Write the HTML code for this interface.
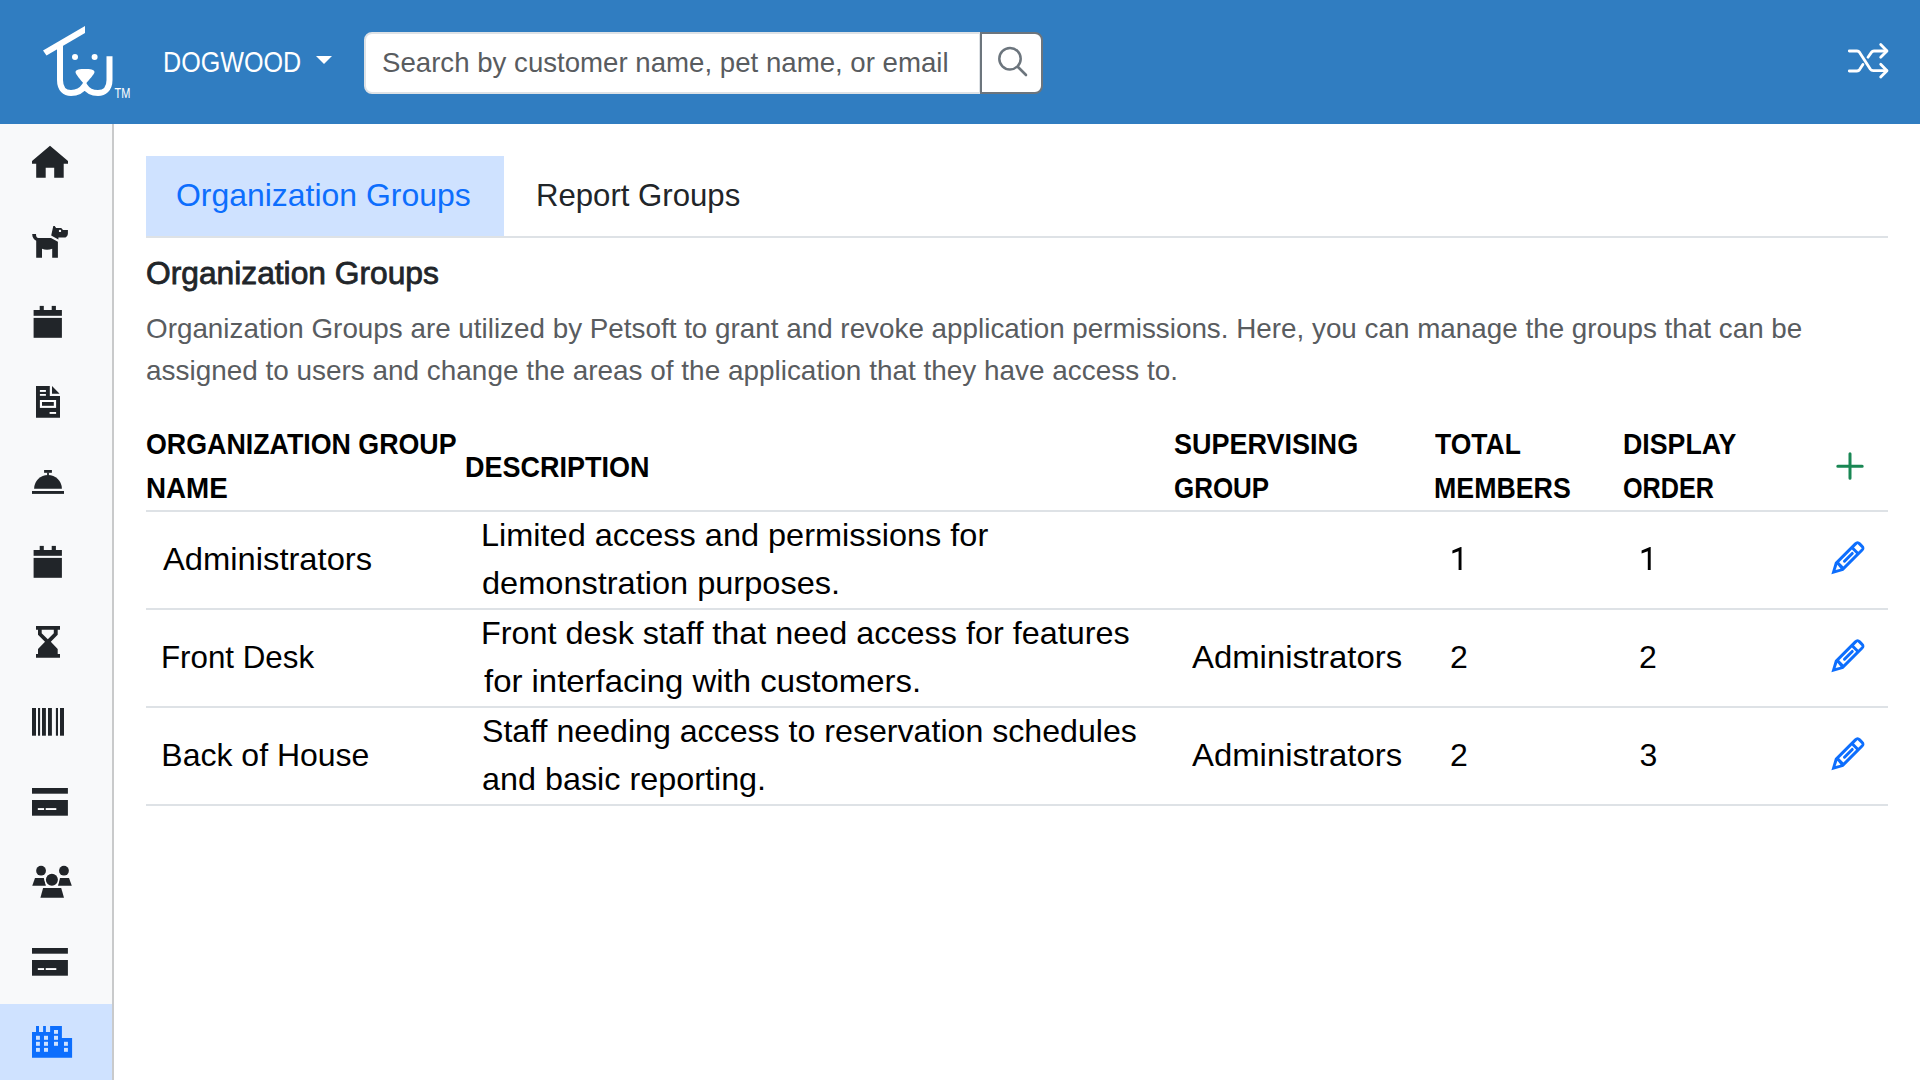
<!DOCTYPE html>
<html>
<head>
<meta charset="utf-8">
<style>
*{margin:0;padding:0;box-sizing:border-box;}
html,body{width:1920px;height:1080px;overflow:hidden;background:#fff;font-family:"Liberation Sans",sans-serif;color:#212529;}
.abs{position:absolute;white-space:nowrap;}
#hdr{position:absolute;left:0;top:0;width:1920px;height:124px;background:#307dc1;}
#side{position:absolute;left:0;top:124px;width:112px;height:956px;background:#f8f9fa;}
#sideb{position:absolute;left:112px;top:124px;width:2px;height:956px;background:#c9cacb;}
#active{position:absolute;left:0;top:1004px;width:112px;height:76px;background:#cfe2ff;}
.t32{font-size:32px;line-height:48px;}
.t28{font-size:28px;line-height:42px;}
.th{font-size:28px;line-height:44px;font-weight:bold;color:#000;}
.td{font-size:32px;line-height:48px;color:#000;}
.hl{position:absolute;left:146px;width:1742px;height:2px;background:#dee2e6;}
</style>
</head>
<body>
<div id="hdr"></div>
<!-- logo -->
<svg class="abs" style="left:0;top:0" width="140" height="124" viewBox="0 0 140 124">
  <polygon points="43,50.5 85,26 85,33 46.5,55.5" fill="#fff"/>
  <path d="M60,45 V80 C60,89 65,93 71,93 C77,93 82,90 84.6,86 C87,90 92,93 98,93 C104,93 109.5,89 109.5,80 V56.2" stroke="#fff" stroke-width="6" fill="none"/>
  <path d="M75.5,72 C75.5,69.5 80,69 85,69 C90,69 94.5,69.5 94.5,72 C94.5,74 89,80 86,83.5 C85.3,84.3 84.3,84.3 83.6,83.5 C80.5,80 75.5,74 75.5,72 Z" fill="#fff"/>
  <circle cx="75" cy="57" r="3" fill="#fff"/>
  <circle cx="94.6" cy="57" r="3" fill="#fff"/>
  <text x="114.6" y="98" font-family="Liberation Sans" font-size="14" fill="#fff" textLength="15.8" lengthAdjust="spacingAndGlyphs">TM</text>
</svg>
<svg class="abs" style="left:316px;top:56px" width="16" height="8" viewBox="0 0 16 8"><polygon points="0,0 16,0 8,8" fill="#fff"/></svg>
<!-- search -->
<div class="abs" style="left:364px;top:32px;width:617px;height:62px;background:#fff;border:2px solid #dee2e6;border-radius:8px 0 0 8px;"></div>
<div class="abs" style="left:980px;top:32px;width:63px;height:62px;background:#fff;border:2px solid #6c757d;border-radius:0 8px 8px 0;"></div>
<svg class="abs" style="left:980px;top:32px" width="63" height="62" viewBox="980 32 63 62">
  <circle cx="1010" cy="58.7" r="10.7" stroke="#6c757d" stroke-width="2.5" fill="none"/>
  <line x1="1018" y1="67" x2="1026" y2="75" stroke="#6c757d" stroke-width="2.6" stroke-linecap="round"/>
</svg>
<!-- shuffle -->
<svg class="abs" style="left:1830px;top:30px" width="70" height="60" viewBox="1830 30 70 60" fill="none" stroke="#fff" stroke-width="2.8" stroke-linecap="round" stroke-linejoin="round">
  <path d="M1849.3,51 H1857 Q1858.6,51 1859.6,52.4 L1870.4,69.3 Q1871.4,70.7 1873.2,70.7 H1886.5"/>
  <path d="M1849.3,71 H1857 Q1858.6,71 1859.6,69.6 L1862.9,64.5"/>
  <path d="M1868,57.2 L1871.4,52.4 Q1872.4,51 1874,51 H1886.5"/>
  <path d="M1880.7,44.6 L1887,51 L1880.7,57.3"/>
  <path d="M1880.7,64.2 L1887,70.7 L1880.7,77.1"/>
</svg>

<!-- sidebar -->
<div id="side"></div>
<div id="active"></div>
<div id="sideb"></div>
<svg class="abs" style="left:0;top:0" width="112" height="1080" viewBox="0 0 112 1080">
  <g fill="#212529">
    <!-- home -->
    <path d="M32,161 L50,145.8 L68,161 V163.8 H63.7 V177.7 H54.2 V167.8 H45.7 V177.7 H36.2 V163.8 H32 Z"/>
    <!-- dog -->
    <path d="M32.2,234 H36 C36,236.5 36.8,238 38.5,238 H51 L57.9,241.8 V257.7 H52.2 V248.7 Q47,250.8 42,248.7 V257.7 H36.2 V240.8 C34,239.8 32.2,237.5 32.2,234 Z"/>
    <path d="M53.3,226 H54.7 L56.1,228.1 H61.2 L63,230 H67.9 V233.4 C67.9,236 66,237.6 64,237.6 H58.4 V239.4 L51.2,235.5 Z"/>
    <circle cx="60" cy="230.9" r="1.2" fill="#f8f9fa"/>
    <!-- calendar 1 -->
    <rect x="33.6" y="310" width="28.3" height="5.8"/>
    <rect x="33.6" y="317.9" width="28.3" height="19.9"/>
    <rect x="39.7" y="305.9" width="4.1" height="4.5"/>
    <rect x="51.7" y="305.9" width="4.2" height="4.5"/>
    <!-- doc -->
    <path d="M36,386.1 H49.8 V396 H60 V417.8 H36 Z"/>
    <polygon points="52,386.1 52,393.7 59.6,393.7"/>
    <!-- bell -->
    <rect x="44.1" y="470" width="7.8" height="2.8"/>
    <rect x="47.1" y="472.5" width="1.8" height="3"/>
    <path d="M34.1,488.8 A13.9,13.9 0 0 1 61.9,488.8 Z"/>
    <rect x="32" y="491" width="32" height="2.9"/>
    <!-- calendar 2 -->
    <rect x="33.6" y="550" width="28.3" height="5.8"/>
    <rect x="33.6" y="557.9" width="28.3" height="19.9"/>
    <rect x="39.7" y="545.9" width="4.1" height="4.5"/>
    <rect x="51.7" y="545.9" width="4.2" height="4.5"/>
    <!-- hourglass -->
    <path fill-rule="evenodd" d="M36,626.1 H60 V629.8 H57.7 V634.7 L50.8,641.8 L57.7,649 V654.1 H60 V657.8 H36 V654.1 H38 V649 L45,641.8 L38,634.7 V629.8 H36 Z M41.7,629.8 V633.3 L47.8,639.3 L53.8,633.3 V629.8 Z"/>
    <!-- barcode -->
    <rect x="32" y="708" width="4" height="27.7"/>
    <rect x="38" y="708" width="2.1" height="27.7"/>
    <rect x="42" y="708" width="3.9" height="27.7"/>
    <rect x="48" y="708" width="3.9" height="27.7"/>
    <rect x="55.9" y="708" width="2.1" height="27.7"/>
    <rect x="60" y="708" width="4" height="27.7"/>
    <!-- card 1 -->
    <rect x="32" y="788" width="35.9" height="5.7"/>
    <rect x="32" y="800" width="35.9" height="15.7"/>
    <!-- people -->
    <circle cx="41.05" cy="870.7" r="4.9"/>
    <circle cx="63.96" cy="870.7" r="4.9"/>
    <polygon points="35,878.1 43.8,878.1 45.9,885.8 32.25,885.8"/>
    <polygon points="60,878.1 69,878.1 71.8,885.8 58,885.8"/>
    <circle cx="51.9" cy="879.8" r="7.3" fill="#fff"/>
    <circle cx="51.9" cy="879.8" r="6"/>
    <polygon points="43.1,888.1 61.2,888.1 64,897.8 40.4,897.8"/>
    <!-- card 2 -->
    <rect x="32" y="948" width="35.9" height="5.7"/>
    <rect x="32" y="960" width="35.9" height="15.7"/>
  </g>
  <g fill="#fff">
    <rect x="39.9" y="390" width="6" height="1.9"/>
    <rect x="39.9" y="394" width="6" height="1.8"/>
    <rect x="39.9" y="400" width="16.2" height="7.9"/>
    <rect x="49.6" y="412" width="6.5" height="1.9"/>
    <rect x="37.8" y="808.1" width="6.3" height="1.9"/>
    <rect x="45.7" y="808.1" width="10.6" height="1.9"/>
    <rect x="37.8" y="968.1" width="6.3" height="1.9"/>
    <rect x="45.7" y="968.1" width="10.6" height="1.9"/>
  </g>
  <rect x="42" y="402" width="11.8" height="3.8" fill="#212529"/>
  <!-- building -->
  <path fill="#0d6efd" d="M32,1032 H36 V1026.1 H39 V1032 H43.1 V1026.1 H45.9 V1032 H50.1 V1026.1 H61.9 V1037.9 H72.1 V1057.8 H32 Z"/>
  <g fill="#cfe2ff">
    <rect x="54" y="1030" width="4" height="3.8"/>
    <rect x="36" y="1035.8" width="3.9" height="4"/>
    <rect x="44" y="1035.8" width="4" height="4"/>
    <rect x="54" y="1035.8" width="4" height="4"/>
    <rect x="36" y="1041.8" width="3.9" height="4"/>
    <rect x="44" y="1041.8" width="4" height="4"/>
    <rect x="54" y="1041.8" width="4" height="4"/>
    <rect x="64" y="1041.8" width="3.9" height="4"/>
    <rect x="36" y="1047.9" width="3.9" height="3.9"/>
    <rect x="44" y="1047.9" width="4" height="3.9"/>
    <rect x="64" y="1047.9" width="3.9" height="3.9"/>
  </g>
</svg>

<!-- tabs -->
<div class="abs" style="left:146px;top:156px;width:358px;height:81px;background:#cfe2ff;"></div>
<div class="hl" style="top:236px;"></div>

<!-- heading -->

<!-- table header -->
<svg class="abs" style="left:1830px;top:446px" width="40" height="40" viewBox="1830 446 40 40">
  <path d="M1837.8,466.2 H1862.2 M1850,453.8 V478.2" stroke="#198754" stroke-width="3" stroke-linecap="round"/>
</svg>
<div class="hl" style="top:510px;"></div>

<!-- rows -->
<div class="hl" style="top:608px;"></div>

<div class="hl" style="top:706px;"></div>

<div class="hl" style="top:804px;"></div>

<!-- pencils -->
<svg class="abs" style="left:1820px;top:520px" width="60" height="300" viewBox="0 0 60 300">
  <defs>
    <g id="pen">
      <path fill="#0d6efd" fill-rule="evenodd" d="M-1,0 L10,-6 H37.5 Q42,-6 42,-1.5 V1.5 Q42,6 37.5,6 H10 Z M5,0 L10,-2.5 L9.5,2.5 Z M13,-3 H31 V3 H13 Z M34,-3 H39 V3 H34 Z"/>
      <path d="M17.5,0 H28.5" stroke="#0d6efd" stroke-width="3" stroke-linecap="round"/>
    </g>
  </defs>
  <use href="#pen" transform="translate(12.1,53.6) rotate(-45)"/>
  <use href="#pen" transform="translate(12.1,151.6) rotate(-45)"/>
  <use href="#pen" transform="translate(12.1,249.6) rotate(-45)"/>
</svg>
<svg class="abs" style="left:1440px;top:540px" width="230" height="40" viewBox="1440 540 230 40">
  <path fill="#000" d="M1458.6,569.9 V551.3 L1452.4,553.4 V550.5 L1460.7,547.1 H1461.5 V569.9 Z"/>
  <path fill="#000" d="M1647.8,569.9 V551.3 L1641.6,553.4 V550.5 L1649.9,547.1 H1650.7 V569.9 Z"/>
</svg>
<div class="abs tx" id="t_dog" style="left:163.25px;top:41px;font-size:30px;line-height:42px;color:#fff;transform:scaleX(0.8373);transform-origin:0 0;">DOGWOOD</div>
<div class="abs tx" id="t_ph" style="left:382.11px;top:42px;font-size:28px;line-height:42px;color:#595c5f;transform:scaleX(0.9867);transform-origin:0 0;">Search by customer name, pet name, or email</div>
<div class="abs tx" id="t_tab" style="left:176.20px;top:171px;font-size:32px;line-height:48px;color:#0d6efd;transform:scaleX(0.9980);transform-origin:0 0;">Organization Groups</div>
<div class="abs tx" id="t_rep" style="left:535.57px;top:171px;font-size:32px;line-height:48px;color:#212529;transform:scaleX(0.9730);transform-origin:0 0;">Report Groups</div>
<div class="abs tx" id="t_h" style="left:145.91px;top:249px;font-size:32px;line-height:48px;color:#212529;-webkit-text-stroke:0.8px #212529;transform:scaleX(0.9918);transform-origin:0 0;">Organization Groups</div>
<div class="abs tx" id="t_p1" style="left:146.10px;top:308px;font-size:28px;line-height:42px;color:#595c5f;transform:scaleX(0.9936);transform-origin:0 0;">Organization Groups are utilized by Petsoft to grant and revoke application permissions. Here, you can manage the groups that can be</div>
<div class="abs tx" id="t_p2" style="left:146.10px;top:350px;font-size:28px;line-height:42px;color:#595c5f;transform:scaleX(0.9969);transform-origin:0 0;">assigned to users and change the areas of the application that they have access to.</div>
<div class="abs tx" id="t_th1" style="left:145.53px;top:422px;font-size:30px;line-height:44px;font-weight:bold;color:#000;transform:scaleX(0.8931);transform-origin:0 0;">ORGANIZATION GROUP</div>
<div class="abs tx" id="t_th2" style="left:145.55px;top:466px;font-size:30px;line-height:44px;font-weight:bold;color:#000;transform:scaleX(0.9257);transform-origin:0 0;">NAME</div>
<div class="abs tx" id="t_th3" style="left:465.42px;top:445px;font-size:30px;line-height:44px;font-weight:bold;color:#000;transform:scaleX(0.8993);transform-origin:0 0;">DESCRIPTION</div>
<div class="abs tx" id="t_th4" style="left:1174.29px;top:422px;font-size:30px;line-height:44px;font-weight:bold;color:#000;transform:scaleX(0.9004);transform-origin:0 0;">SUPERVISING</div>
<div class="abs tx" id="t_th5" style="left:1174.30px;top:466px;font-size:30px;line-height:44px;font-weight:bold;color:#000;transform:scaleX(0.8651);transform-origin:0 0;">GROUP</div>
<div class="abs tx" id="t_th6" style="left:1435.00px;top:422px;font-size:30px;line-height:44px;font-weight:bold;color:#000;transform:scaleX(0.8836);transform-origin:0 0;">TOTAL</div>
<div class="abs tx" id="t_th7" style="left:1434.11px;top:466px;font-size:30px;line-height:44px;font-weight:bold;color:#000;transform:scaleX(0.8917);transform-origin:0 0;">MEMBERS</div>
<div class="abs tx" id="t_th8" style="left:1623.11px;top:422px;font-size:30px;line-height:44px;font-weight:bold;color:#000;transform:scaleX(0.8909);transform-origin:0 0;">DISPLAY</div>
<div class="abs tx" id="t_th9" style="left:1623.16px;top:466px;font-size:30px;line-height:44px;font-weight:bold;color:#000;transform:scaleX(0.8398);transform-origin:0 0;">ORDER</div>
<div class="abs tx" id="t_r1a" style="left:162.81px;top:535px;font-size:32px;line-height:48px;color:#000;transform:scaleX(1.0226);transform-origin:0 0;">Administrators</div>
<div class="abs tx" id="t_r1b" style="left:481.46px;top:511px;font-size:32px;line-height:48px;color:#000;transform:scaleX(1.0149);transform-origin:0 0;">Limited access and permissions for</div>
<div class="abs tx" id="t_r1c" style="left:482.49px;top:559px;font-size:32px;line-height:48px;color:#000;transform:scaleX(1.0166);transform-origin:0 0;">demonstration purposes.</div>
<div class="abs tx" id="t_r2a" style="left:161.35px;top:633px;font-size:32px;line-height:48px;color:#000;transform:scaleX(0.9781);transform-origin:0 0;">Front Desk</div>
<div class="abs tx" id="t_r2b" style="left:481.47px;top:609px;font-size:32px;line-height:48px;color:#000;transform:scaleX(1.0110);transform-origin:0 0;">Front desk staff that need access for features</div>
<div class="abs tx" id="t_r2c" style="left:483.51px;top:657px;font-size:32px;line-height:48px;color:#000;transform:scaleX(1.0284);transform-origin:0 0;">for interfacing with customers.</div>
<div class="abs tx" id="t_r2s" style="left:1191.89px;top:633px;font-size:32px;line-height:48px;color:#000;transform:scaleX(1.0275);transform-origin:0 0;">Administrators</div>
<div class="abs tx" id="t_r2d" style="left:1450.00px;top:633px;font-size:32px;line-height:48px;color:#000;transform:scaleX(1.0000);transform-origin:0 0;">2</div>
<div class="abs tx" id="t_r2e" style="left:1639.00px;top:633px;font-size:32px;line-height:48px;color:#000;transform:scaleX(1.0000);transform-origin:0 0;">2</div>
<div class="abs tx" id="t_r3a" style="left:161.30px;top:731px;font-size:32px;line-height:48px;color:#000;transform:scaleX(1.0000);transform-origin:0 0;">Back of House</div>
<div class="abs tx" id="t_r3b" style="left:482.49px;top:707px;font-size:32px;line-height:48px;color:#000;transform:scaleX(1.0040);transform-origin:0 0;">Staff needing access to reservation schedules</div>
<div class="abs tx" id="t_r3c" style="left:482.49px;top:755px;font-size:32px;line-height:48px;color:#000;transform:scaleX(1.0108);transform-origin:0 0;">and basic reporting.</div>
<div class="abs tx" id="t_r3s" style="left:1191.89px;top:731px;font-size:32px;line-height:48px;color:#000;transform:scaleX(1.0275);transform-origin:0 0;">Administrators</div>
<div class="abs tx" id="t_r3d" style="left:1450.00px;top:731px;font-size:32px;line-height:48px;color:#000;transform:scaleX(1.0000);transform-origin:0 0;">2</div>
<div class="abs tx" id="t_r3e" style="left:1639.40px;top:731px;font-size:32px;line-height:48px;color:#000;transform:scaleX(1.0000);transform-origin:0 0;">3</div>
</body>
</html>
